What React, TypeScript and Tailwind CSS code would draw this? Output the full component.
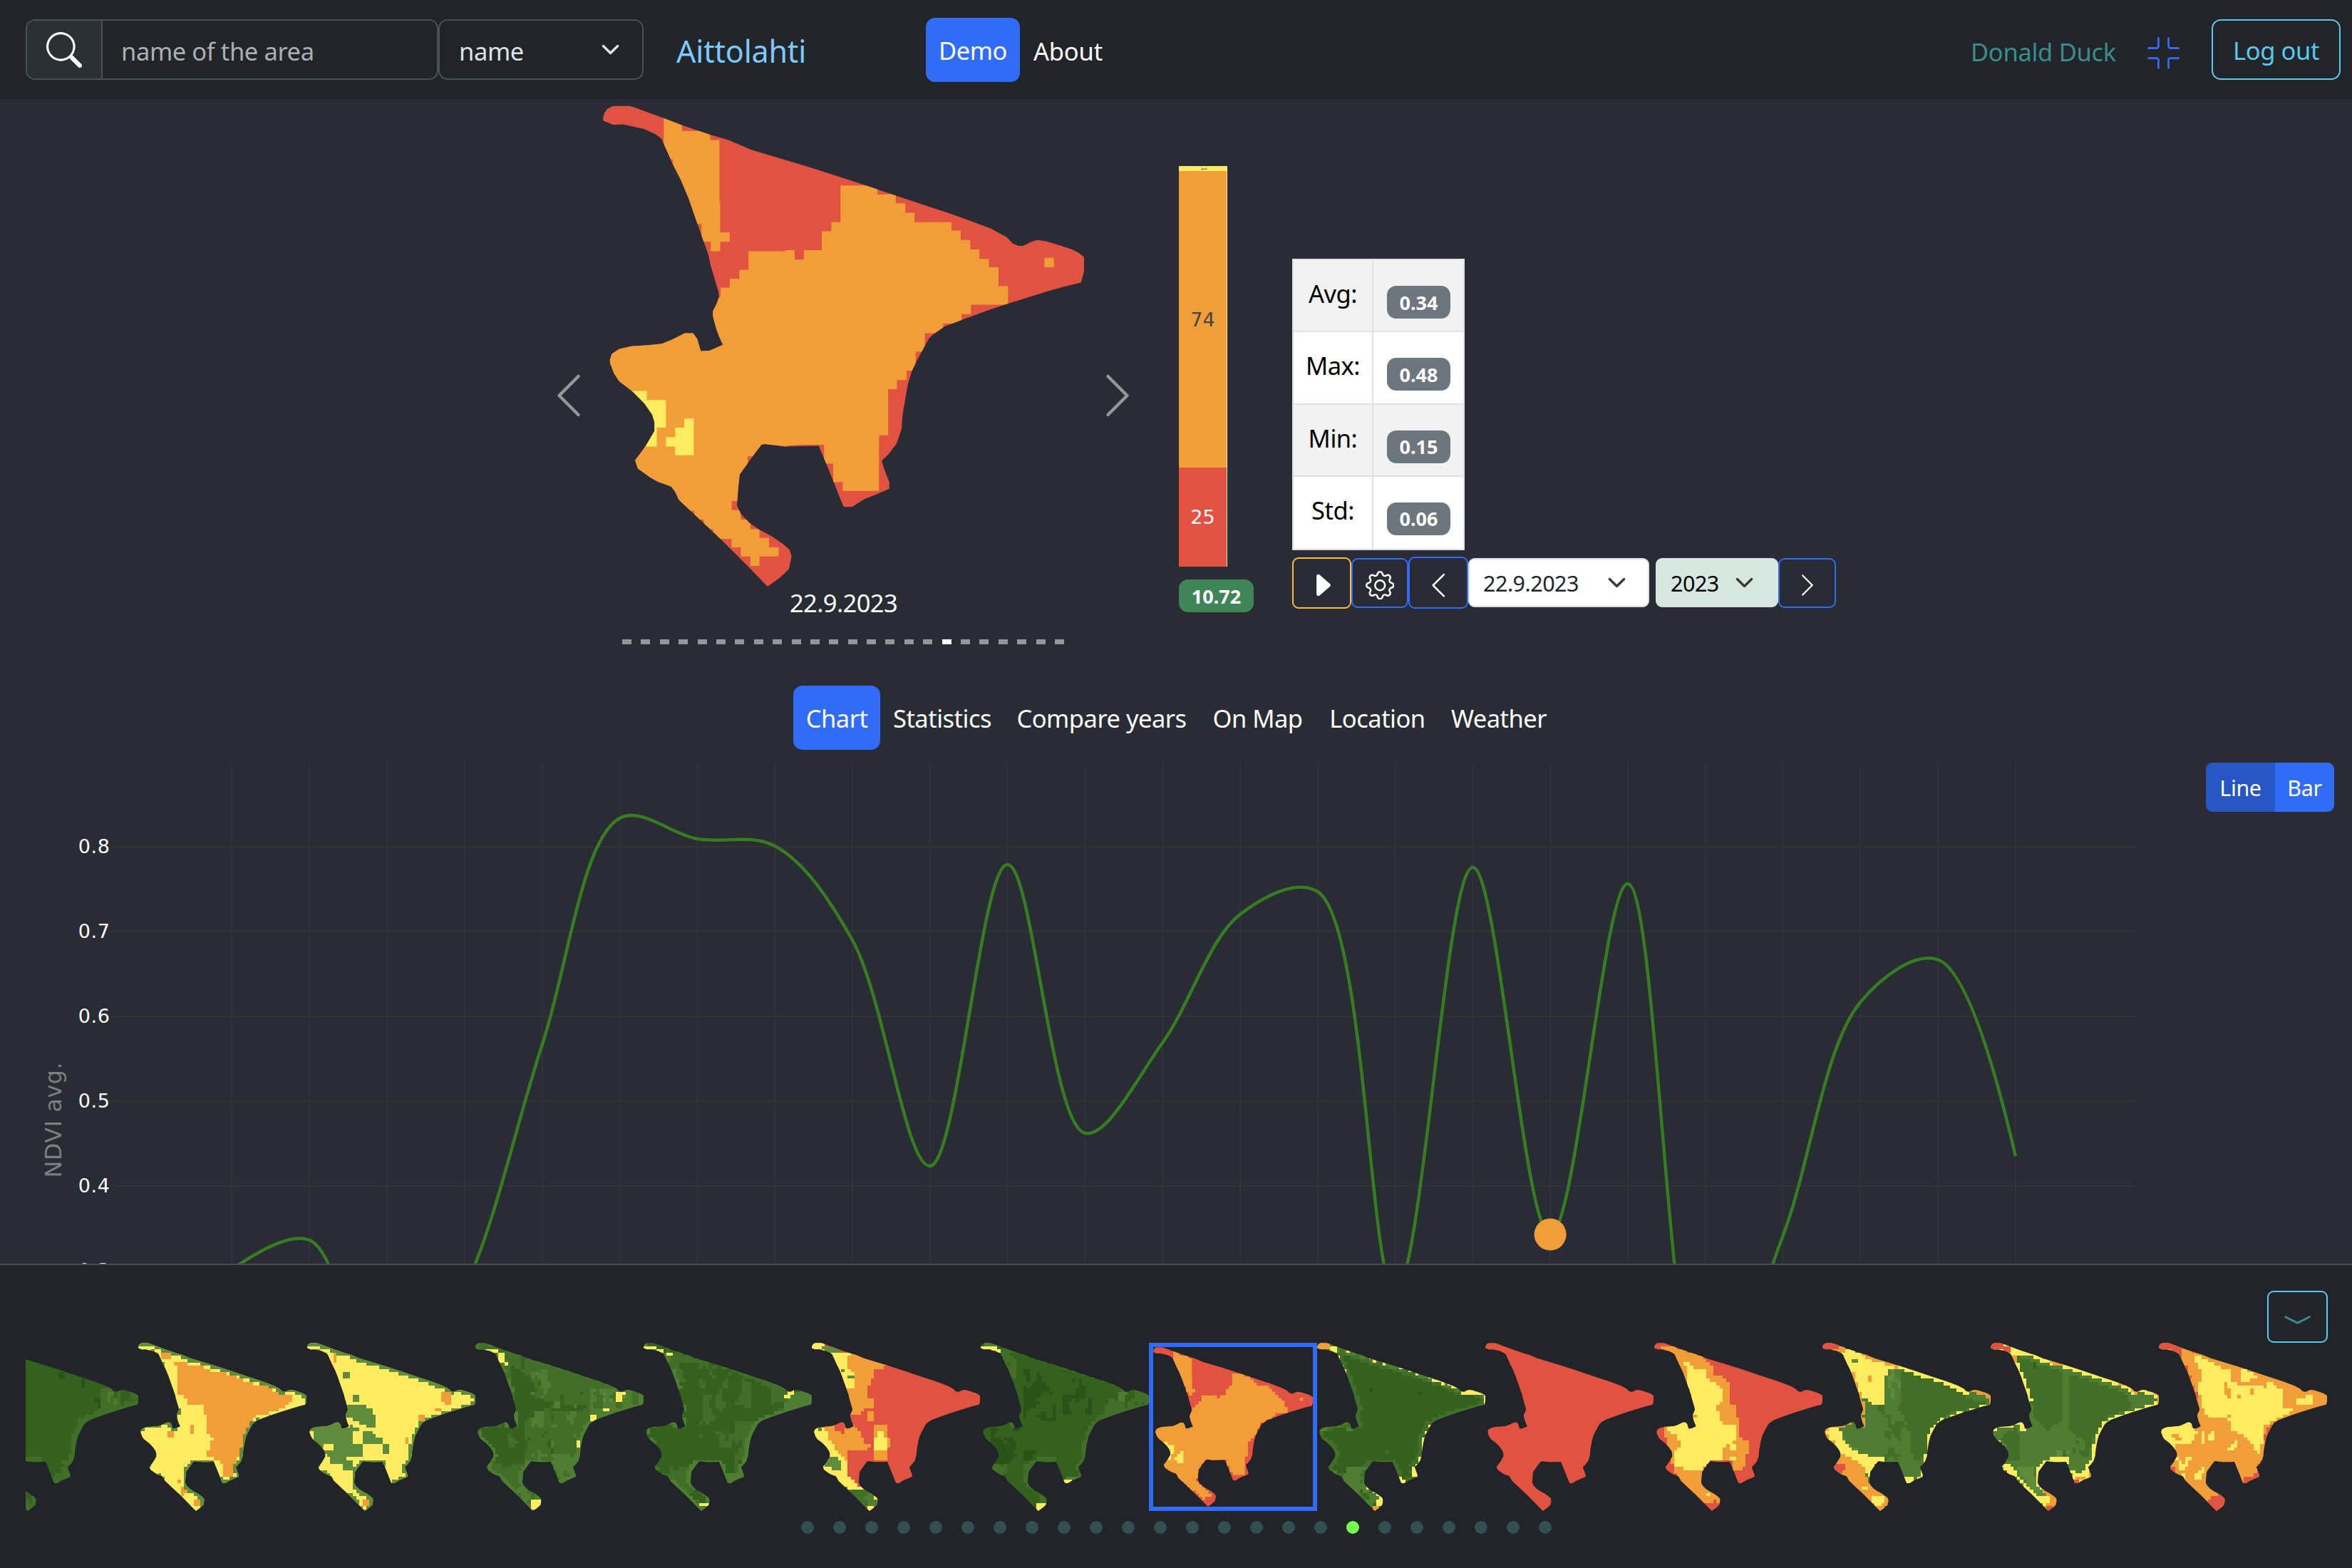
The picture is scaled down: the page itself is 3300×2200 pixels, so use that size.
import React from 'react';
import {
  BsCaretRightFill,
  BsChevronCompactDown,
  BsChevronLeft,
  BsChevronRight,
  BsFullscreenExit,
  BsGear,
  BsSearch,
} from 'react-icons/bs';

type Pt = [number, number];

/* NDVI palette */
const R = '#e15241';
const O = '#f19e38';
const Y = '#fdec5f';
const G = '#5e8b3c';
const L = '#4f7d31';
const M = '#416f28';
const D = '#35611f';
const X = '#2a5417';

/* ---------- field geometry ---------- */

const OUTLINE =
  '161,70 165,55 173,44 188,36 230,36 245,41 320,70 370,90 440,115 490,130 550,157 620,179 700,204 780,231 850,255 928,283 1000,308 1075,334 1130,355 1178,374 1218,397 1235,415 1250,421 1262,421 1280,411 1298,405 1320,408 1350,417 1390,431 1408,441 1421,452 1421,490 1413,522 1370,533 1325,546 1222,580 1170,598 1100,625 1055,643 1025,665 1014,677 1003,698 985,733 970,765 960,800 953,840 946,885 943,925 930,965 908,995 891,1012 897,1033 906,1058 911,1070 911,1089 880,1103 845,1118 813,1139 792,1139 785,1124 765,1070 745,1018 726,971 675,972 640,973 625,971 600,968 585,966 576,968 560,990 519,1050 515,1090 512,1135 522,1158 545,1183 570,1201 605,1221 635,1243 650,1257 655,1275 648,1310 625,1333 592,1358 545,1307 470,1228 415,1174 360,1120 350,1098 340,1083 305,1070 285,1058 252,1033 245,1010 258,993 275,968 296,930 296,905 290,885 270,855 240,823 203,793 190,772 180,745 179,735 184,718 203,705 235,697 280,694 315,690 340,680 375,661 397,661 408,677 417,710 440,709 475,693 465,670 458,650 449,615 449,600 458,582 465,562 463,545 443,475 437,445 420,395 405,350 385,290 365,240 347,203 335,175 314,126 300,115 270,100 215,87 188,88 162,77';

const parse = (s: string): Pt[] => s.split(' ').map((p) => p.split(',').map(Number) as Pt);

const TW = 336;
const TH = 708;
const outlineSmall: Pt[] = parse(OUTLINE).map(([x, y]) => [((x - 161) / 1260) * TW, ((y - 35) / 1323) * TH]);
const outlineSmallStr = outlineSmall.map((p) => p.map((v) => v.toFixed(1)).join(',')).join(' ');

const STRIP =
  '320,60 368,60 368,105 442,105 442,130 466,130 466,300 468,300 468,384 493,384 493,410 468,410 468,436 443,436 443,410 419,410 419,361 320,361';
const BODY =
  '783,255 852,255 880,264 880,280 928,278 928,304 953,304 953,330 977,330 977,356 1074,356 1074,379 1098,379 1098,405 1123,405 1123,431 1147,431 1147,457 1172,457 1172,480 1197,480 1197,532 1222,532 1222,583 1125,583 1125,609 1100,609 1100,635 1052,635 1052,661 1004,661 1004,712 980,712 980,764 956,764 956,790 931,790 931,815 908,815 908,942 884,942 884,1095 789,1095 789,1071 764,1071 764,1020 740,1020 740,968 675,968 642,971 642,1000 540,1000 540,1123 498,1123 498,1148 522,1148 522,1174 547,1174 547,1200 571,1200 571,1224 596,1224 596,1250 621,1250 621,1275 571,1275 571,1301 547,1301 547,1275 522,1275 522,1250 498,1250 498,1227 449,1227 449,1200 425,1200 425,1174 400,1174 400,1150 160,1150 160,640 430,640 430,562 469,562 469,536 493,536 493,512 518,512 518,487 542,487 542,436 638,436 638,433 663,433 663,459 687,459 687,433 734,433 734,381 759,381 759,356 783,356';

function FieldMap({ id, className }: { id: string; className: string }) {
  return (
    <svg className={className} viewBox="161 35 1260 1323" preserveAspectRatio="none">
      <clipPath id={id}>
        <polygon points={OUTLINE} />
      </clipPath>
      <g clipPath={`url(#${id})`}>
        <rect x="161" y="35" width="1260" height="1323" fill={R} />
        <polygon points={STRIP} fill={O} />
        <rect x="320" y="183" width="24" height="24" fill={R} />
        <polygon points={BODY} fill={O} />
        <rect x="1317" y="454" width="25" height="26" fill={O} />
        <polygon points="200,820 276,820 276,845 326,845 326,921 302,921 302,973 200,973" fill={Y} />
        <polygon points="374,896 399,896 399,997 350,997 350,973 326,973 326,947 350,947 350,921 374,921" fill={Y} />
      </g>
    </svg>
  );
}

/* ---------- rasterised thumbnails ---------- */

interface Layer {
  c: string;
  /** polygon the layer is limited to */
  p?: string;
  /** rectangle x1,y1,x2,y2 the layer is limited to */
  r?: [number, number, number, number];
  /** share of the cells that are painted */
  d?: number;
  /** only cells whose neighbour at this offset lies outside the field */
  e?: Pt;
}
interface Thumb {
  x0: number;
  base: string;
  layers: Layer[];
}

const Y0 = 372;
const N = 51.5;
const CW = TW / N;
const CH = TH / N;

function inside(x: number, y: number, poly: Pt[]) {
  let hit = false;
  for (let i = 0, j = poly.length - 1; i < poly.length; j = i++) {
    const [xi, yi] = poly[i];
    const [xj, yj] = poly[j];
    if (yi > y !== yj > y && x < ((xj - xi) * (y - yi)) / (yj - yi) + xi) hit = !hit;
  }
  return hit;
}

function hash(a: number, b: number, c: number) {
  const s = Math.sin(a * 127.1 + b * 311.7 + c * 74.7) * 43758.5453;
  return s - Math.floor(s);
}

/** Clumpy noise in 0..1: smooth patches with a little grain on top. */
function noise(i: number, j: number, seed: number) {
  const x = i / 2.3;
  const y = j / 3.1;
  const xi = Math.floor(x);
  const yi = Math.floor(y);
  const fx = x - xi;
  const fy = y - yi;
  const top = hash(xi, yi, seed) * (1 - fx) + hash(xi + 1, yi, seed) * fx;
  const bottom = hash(xi, yi + 1, seed) * (1 - fx) + hash(xi + 1, yi + 1, seed) * fx;
  return 0.78 * (top * (1 - fy) + bottom * fy) + 0.22 * hash(i, Math.floor(j / 2), seed + 9);
}

function raster(t: Thumb): Record<string, string> {
  const polys = t.layers.map((l) => (l.p ? parse(l.p) : null));
  const out: Record<string, string> = {};
  for (let j = 0; j < 52; j++) {
    let start = 0;
    let cur = '';
    for (let i = 0; i <= 52; i++) {
      let c = '';
      if (i < 52) {
        c = t.base;
        const cx = (i + 0.5) * CW;
        const cy = (j + 0.5) * CH;
        t.layers.forEach((l, k) => {
          const ax = cx + t.x0;
          const ay = cy + Y0;
          if (l.r && !(ax >= l.r[0] && ax <= l.r[2] && ay >= l.r[1] && ay <= l.r[3])) return;
          const poly = polys[k];
          if (poly && !inside(ax, ay, poly)) return;
          if (l.e && inside(cx + l.e[0] * CW, cy + l.e[1] * CH, outlineSmall)) return;
          if (l.d !== undefined && noise(i, j, k + t.x0) > 0.5 + (l.d - 0.5) * 0.72) return;
          c = l.c;
        });
      }
      if (c !== cur) {
        if (cur) {
          const x1 = start * CW;
          const x2 = i * CW;
          out[cur] = `${out[cur] ?? ''}M${x1.toFixed(2)} ${(j * CH).toFixed(2)}H${x2.toFixed(2)}v${(CH + 0.05).toFixed(2)}H${x1.toFixed(2)}z`;
        }
        start = i;
        cur = c;
      }
    }
  }
  return out;
}

const THUMBS: (Thumb | null)[] = [
  {
    x0: -59,
    base: D,
    layers: [
      { c: X, r: [118, 500, 132, 530], d: 0.6 },
      { c: X, r: [163, 530, 170, 570] },
      { c: X, r: [170, 612, 200, 650], d: 0.55 },
      { c: M, e: [1.2, 1.2] },
      { c: M, e: [2.2, 1.5], d: 0.5 },
      { c: M, r: [205, 560, 240, 680], d: 0.6 },
      { c: L, r: [215, 575, 235, 640], d: 0.5 },
    ],
  },
  {
    x0: 277,
    base: Y,
    layers: [
      {
        c: O,
        p: '345,450 378,450 378,463 410,463 410,477 425,490 456,503 475,520 505,545 540,557 560,595 592,600 575,635 545,665 510,680 497,735 484,780 482,825 475,850 463,937 443,937 446,880 430,860 412,855 425,770 412,740 410,630 372,635 372,600 352,595 358,490',
      },
      { c: Y, r: [440, 880, 452, 925], d: 0.5 },
      { c: O, r: [325, 410, 345, 435] },
      { c: O, r: [333, 750, 346, 775] },
      { c: O, r: [307, 778, 327, 791] },
      { c: O, r: [379, 722, 391, 762] },
      { c: O, r: [386, 1035, 399, 1062] },
      { c: O, r: [353, 955, 361, 967] },
      { c: O, r: [364, 980, 380, 1020], d: 0.6 },
      { c: G, e: [0.7, -0.7] },
      { c: G, e: [0.7, 0.3], r: [370, 680, 520, 1060] },
      { c: G, e: [-0.7, 0], d: 0.35 },
      { c: Y, r: [286, 384, 312, 399] },
    ],
  },
  {
    x0: 613,
    base: Y,
    layers: [
      {
        c: G,
        p: '630,735 655,720 675,707 682,735 705,720 720,740 745,750 750,775 765,775 765,800 725,800 722,850 700,860 690,860 683,885 657,885 655,850 640,810 628,775',
      },
      { c: Y, r: [645, 804, 665, 830] },
      { c: Y, r: [707, 740, 765, 800], d: 0.3 },
      { c: G, p: '700,640 730,640 745,660 752,730 730,725 712,700 690,690' },
      { c: G, r: [688, 490, 700, 518] },
      { c: G, r: [707, 587, 720, 613] },
      { c: G, r: [762, 804, 779, 843] },
      { c: G, r: [683, 870, 702, 912] },
      { c: G, e: [0.8, -0.8] },
      { c: G, e: [0.8, 0.3] },
      { c: G, e: [-0.8, 0.3], d: 0.4 },
      { c: Y, r: [622, 384, 636, 396] },
      { c: Y, r: [900, 598, 941, 634] },
      { c: O, r: [662, 410, 670, 450] },
      { c: O, r: [882, 585, 902, 625] },
      { c: O, r: [888, 625, 898, 640] },
      { c: O, r: [869, 652, 878, 665] },
      { c: O, r: [832, 680, 845, 707] },
      { c: O, r: [810, 777, 818, 800] },
      { c: O, r: [723, 1035, 736, 1062] },
    ],
  },
  {
    x0: 949,
    base: M,
    layers: [
      { c: D, p: '1020,460 1060,520 1060,600 1120,630 1180,630 1150,670 1090,650 1050,700 1050,870 1000,900 985,870 965,780 960,720 1030,700', d: 0.95 },
      { c: D, r: [1040, 430, 1200, 860], d: 0.2 },
      { c: L, r: [1060, 480, 1200, 880], d: 0.25 },
      { c: L, r: [1180, 560, 1260, 680], d: 0.6 },
      { c: G, r: [1190, 575, 1250, 625], d: 0.3 },
      { c: L, r: [1100, 840, 1160, 970], d: 0.6 },
      { c: L, r: [1000, 920, 1090, 1080], d: 0.5 },
      { c: L, e: [1.2, 0.5] },
      { c: L, e: [-1, 0.3], d: 0.6 },
      { c: Y, r: [968, 397, 995, 410] },
      { c: Y, r: [997, 410, 1010, 450] },
      { c: Y, r: [1005, 450, 1013, 465] },
      { c: Y, p: '1227,585 1247,578 1240,622 1230,622' },
      { c: Y, r: [1206, 652, 1214, 665] },
      { c: Y, r: [1176, 680, 1188, 707] },
      { c: Y, r: [1149, 790, 1157, 815] },
      { c: Y, r: [1060, 1035, 1079, 1068] },
    ],
  },
  {
    x0: 1287,
    base: D,
    layers: [
      { c: M, p: '1330,400 1560,540 1570,600 1540,560 1430,460 1360,460 1370,540 1350,540' },
      { c: M, r: [1400, 440, 1500, 860], d: 0.26 },
      { c: M, r: [1470, 700, 1520, 960], d: 0.7 },
      { c: M, r: [1540, 560, 1630, 700], d: 0.7 },
      { c: L, r: [1560, 575, 1630, 660], d: 0.5 },
      { c: M, r: [1310, 900, 1425, 1080], d: 0.7 },
      { c: L, e: [1.2, 0.6] },
      { c: L, e: [-1, 0.3], d: 0.5 },
      { c: L, r: [1450, 920, 1490, 970] },
      { c: Y, r: [1287, 380, 1310, 400] },
      { c: Y, r: [1310, 397, 1324, 410] },
      { c: Y, r: [1330, 409, 1343, 424] },
      { c: Y, r: [1397, 1040, 1415, 1066] },
      { c: Y, r: [1568, 595, 1578, 612] },
      { c: Y, r: [1572, 565, 1584, 590], d: 0.7 },
    ],
  },
  {
    x0: 56,
    base: R,
    layers: [
      { c: O, p: '130,410 203,460 203,475 183,480 183,510 165,560 165,600 177,610 177,640 158,650 155,668 125,670 110,500 110,420' },
      { c: O, p: '80,715 103,715 103,740 120,760 125,720 140,715 150,735 160,790 172,800 170,820 125,820 128,930 150,985 110,960 80,860 75,790' },
      { c: R, p: '125,820 170,820 180,870 160,890 150,920 150,980 128,950' },
      { c: O, r: [170, 655, 183, 707] },
      { c: O, r: [177, 722, 203, 870] },
      { c: O, r: [196, 765, 210, 817] },
      { c: Y, r: [183, 765, 203, 830] },
      { c: Y, r: [188, 750, 197, 765] },
      { c: Y, p: '56,372 85,372 80,395 105,410 137,422 125,440 130,475 143,500 143,570 120,570 95,425 75,405 56,405' },
      { c: Y, p: '50,735 85,735 90,780 105,820 118,860 130,880 130,930 150,970 165,995 140,1000 105,960 75,900 85,850 70,800 55,760' },
      { c: G, p: '78,380 112,400 112,420 90,415 78,400' },
      { c: G, p: '88,850 105,850 118,895 100,915 83,885' },
      { c: M, r: [92, 860, 108, 890], d: 0.5 },
      { c: G, r: [112, 477, 123, 500] },
      { c: G, r: [125, 503, 138, 518] },
      { c: G, r: [66, 730, 74, 750] },
      { c: M, p: '108,965 130,985 160,995 165,985 195,1030 185,1065 165,1085' },
      { c: L, p: '108,965 130,985 160,995 165,985 195,1030 185,1065 165,1085', d: 0.35 },
      { c: Y, r: [180, 1015, 190, 1035] },
      { c: Y, r: [168, 1062, 182, 1080] },
    ],
  },
  {
    x0: 392,
    base: D,
    layers: [
      { c: X, p: '470,480 500,480 530,560 540,640 540,700 480,690 475,560', d: 0.65 },
      { c: X, r: [555, 530, 612, 680], d: 0.5 },
      { c: X, r: [410, 735, 480, 885], d: 0.5 },
      { c: X, r: [480, 820, 505, 870], d: 0.7 },
      { c: M, r: [430, 400, 465, 520], d: 0.8 },
      { c: M, r: [610, 560, 730, 700], d: 0.35 },
      { c: L, r: [665, 580, 690, 625], d: 0.6 },
      { c: M, r: [500, 855, 545, 875] },
      { c: M, r: [410, 880, 520, 1080], d: 0.3 },
      { c: M, e: [1, 0.5] },
      { c: L, r: [560, 930, 595, 950], d: 0.8 },
      { c: L, r: [400, 372, 425, 385] },
      { c: Y, p: '388,385 415,383 425,395 432,415 410,405 388,402' },
      { c: Y, r: [680, 574, 688, 585] },
      { c: Y, r: [558, 950, 572, 965] },
      { c: Y, r: [500, 1050, 524, 1080] },
    ],
  },
  null,
  {
    x0: 1067,
    base: D,
    layers: [
      { c: X, r: [1150, 570, 1180, 625], d: 0.35 },
      { c: X, r: [1270, 582, 1277, 598] },
      { c: M, r: [1190, 820, 1220, 870], d: 0.5 },
      { c: M, e: [1.6, -1.2] },
      { c: M, e: [1.4, 0.6] },
      { c: M, e: [-1.2, 0.3] },
      { c: L, e: [0.9, -0.8], d: 0.6 },
      { c: L, r: [1100, 900, 1200, 1060], d: 0.4 },
      { c: Y, e: [0.5, -0.5], r: [1095, 400, 1403, 600], d: 0.55 },
      { c: Y, r: [1355, 570, 1385, 592] },
      { c: Y, e: [0.6, 0], r: [1370, 570, 1403, 640] },
      { c: Y, e: [0.5, 0], r: [1260, 720, 1300, 940], d: 0.6 },
      { c: Y, e: [-0.5, 0], r: [1100, 430, 1140, 560], d: 0.6 },
      { c: Y, r: [1228, 930, 1238, 965] },
      { c: Y, r: [1228, 950, 1245, 965] },
      { c: Y, r: [1258, 900, 1268, 940] },
      { c: Y, p: '1165,980 1200,1010 1200,1050 1185,1070 1188,1020' },
      { c: Y, r: [1092, 385, 1106, 412] },
      { c: O, r: [1067, 372, 1094, 402] },
      { c: O, r: [1176, 1065, 1190, 1080] },
    ],
  },
  { x0: 1403, base: R, layers: [] },
  {
    x0: 172,
    base: R,
    layers: [
      {
        c: O,
        p: '183,385 205,380 230,400 275,437 288,470 288,505 313,517 325,550 325,630 333,640 340,700 345,775 358,790 358,835 355,880 348,910 333,912 325,870 285,870 268,900 268,965 310,1020 300,1045 285,1050 265,1050 222,950 210,910 205,850 195,780 190,700 240,700 230,500 200,420',
      },
      {
        c: Y,
        p: '233,450 247,450 247,475 273,477 275,515 290,540 312,570 312,600 300,630 300,680 313,720 333,720 333,790 320,800 307,820 307,865 285,870 265,910 245,912 210,885 210,830 228,800 215,760 195,740 205,700 255,690 250,650 240,560',
      },
      { c: O, r: [293, 630, 300, 655] },
      { c: Y, r: [325, 800, 333, 820] },
      { c: Y, r: [325, 855, 333, 870] },
      { c: Y, r: [275, 1005, 283, 1020] },
      { c: R, r: [172, 765, 200, 790], d: 0.6 },
      { c: R, r: [290, 1035, 305, 1060], d: 0.6 },
    ],
  },
  {
    x0: 509,
    base: L,
    layers: [
      { c: M, p: '665,490 700,500 780,560 800,610 840,620 830,640 760,670 735,720 715,850 690,870 680,720 665,660' },
      { c: M, r: [620, 640, 720, 870], d: 0.25 },
      { c: G, p: '540,740 560,800 620,860 600,880 560,850 530,760', d: 0.7 },
      { c: G, r: [640, 480, 665, 600], d: 0.25 },
      { c: Y, p: '535,385 600,420 665,470 640,490 635,510 635,600 628,640 605,625 595,600 575,600' },
      { c: G, r: [570, 435, 583, 450] },
      { c: O, r: [598, 505, 609, 543] },
      { c: Y, e: [1.0, -0.8], r: [650, 460, 847, 640] },
      { c: O, e: [0.7, -0.7], r: [590, 420, 660, 480] },
      { c: O, e: [0.6, -0.9], r: [805, 570, 847, 600] },
      { c: O, e: [0.5, 0], r: [835, 590, 847, 640], d: 0.6 },
      { c: Y, e: [0.5, 0.2], r: [700, 640, 847, 960], d: 0.75 },
      { c: Y, p: '505,725 540,725 555,800 580,830 620,860 618,880 603,940 590,900 550,840 515,790' },
      { c: Y, r: [615, 858, 632, 874] },
      { c: O, p: '535,830 560,850 590,890 597,935 605,975 650,1030 625,1085 555,950 525,900' },
      { c: O, e: [-0.6, 0], r: [509, 500, 600, 800], d: 0.8 },
      { c: R, p: '530,885 553,885 550,930 530,920' },
      { c: Y, r: [586, 980, 600, 995] },
      { c: Y, p: '605,1020 630,1020 632,1045 622,1062 605,1045' },
      { c: Y, r: [675, 940, 690, 965] },
      { c: O, r: [530, 385, 552, 412] },
      { c: R, r: [509, 372, 540, 400], d: 0.85 },
    ],
  },
  {
    x0: 847,
    base: L,
    layers: [
      { c: M, p: '895,430 940,435 990,470 990,700 960,740 935,690 925,600 905,480' },
      { c: M, p: '1002,480 1060,520 1120,590 1130,650 1080,680 1055,760 1030,780 1005,740' },
      { c: D, r: [900, 430, 960, 480], d: 0.3 },
      { c: M, r: [850, 710, 910, 870], d: 0.45 },
      { c: M, r: [990, 760, 1060, 860], d: 0.4 },
      { c: G, r: [970, 820, 1005, 870], d: 0.7 },
      { c: L, e: [2, -1.6] },
      { c: Y, e: [1.0, -0.7] },
      { c: Y, e: [0.7, 0.3] },
      { c: Y, e: [-0.8, 0.3], r: [880, 420, 940, 620] },
      { c: Y, r: [962, 858, 1003, 875] },
      { c: O, e: [0.6, -0.6], r: [930, 430, 1183, 600], d: 0.3 },
      { c: O, e: [0.4, 0], r: [1160, 570, 1183, 640] },
      { c: Y, p: '868,885 885,880 905,940 950,1010 965,1020 965,1060 945,1050 900,950' },
      { c: G, p: '900,900 930,890 938,970 958,1010 950,1025 925,985' },
      { c: O, p: '955,985 985,1020 975,1085 950,1065 965,1030 945,985' },
      { c: Y, p: '1005,905 1025,920 1040,905 1050,940 1020,965 1008,940' },
      { c: O, r: [1015, 935, 1055, 955], d: 0.7 },
      { c: O, r: [1040, 900, 1050, 940] },
      { c: R, r: [1010, 950, 1025, 965] },
      { c: R, r: [955, 1062, 970, 1080] },
      { c: Y, p: '880,385 930,425 900,425 898,440 885,430' },
      { c: O, r: [885, 425, 897, 450] },
      { c: R, p: '840,372 865,372 884,388 884,410 865,405 840,405' },
    ],
  },
  {
    x0: 1183,
    base: O,
    layers: [
      {
        c: Y,
        p: '1250,422 1275,440 1300,465 1325,490 1345,475 1400,530 1430,570 1428,640 1452,655 1425,690 1395,720 1390,790 1382,840 1360,770 1330,740 1320,690 1280,690 1270,640 1262,560 1270,500',
      },
      { c: O, r: [1325, 460, 1343, 610], d: 0.65 },
      { c: O, r: [1343, 475, 1400, 545], d: 0.4 },
      { c: O, r: [1280, 480, 1425, 700], d: 0.06 },
      { c: Y, r: [1280, 680, 1360, 820], d: 0.25 },
      { c: Y, p: '1180,735 1190,715 1245,700 1255,740 1245,780 1225,800 1225,870 1210,860 1195,790' },
      { c: O, r: [1210, 750, 1250, 850], d: 0.3 },
      { c: Y, r: [1225, 740, 1275, 800], d: 0.4 },
      { c: Y, r: [1215, 860, 1275, 950], d: 0.45 },
      { c: Y, r: [1458, 605, 1490, 640], d: 0.85 },
      { c: Y, r: [1478, 595, 1492, 640] },
      { c: R, e: [-0.5, 0], r: [1225, 400, 1262, 600], d: 0.7 },
      { c: R, e: [0.5, 0.2], r: [1375, 700, 1430, 880], d: 0.6 },
      { c: R, r: [1203, 890, 1215, 925], d: 0.7 },
      { c: R, p: '1350,935 1375,935 1378,880 1390,900 1390,950 1350,970' },
      { c: R, p: '1280,1035 1308,1005 1320,1030 1310,1060 1298,1085 1285,1060' },
      { c: R, p: '1175,372 1205,372 1226,388 1226,425 1205,405 1175,402' },
    ],
  },
];

function Thumbnail({ t, id }: { t: Thumb; id: string }) {
  return (
    <svg className="h-[236px] w-[236.25px] shrink-0" viewBox={`0 0 ${TW} ${TH}`} preserveAspectRatio="none">
      <clipPath id={id}>
        <polygon points={outlineSmallStr} />
      </clipPath>
      <g clipPath={`url(#${id})`}>
        <rect width={TW} height={TH} fill={t.base} />
        {Object.entries(raster(t))
          .filter(([c]) => c !== t.base)
          .map(([c, d]) => (
            <path key={c} d={d} fill={c} shapeRendering="crispEdges" />
          ))}
      </g>
    </svg>
  );
}

/* ---------- chart ---------- */

const NDVI_Y = [
  1781, 1740, 1975, 1808, 1466, 1148, 1177, 1187, 1319, 1636, 1213, 1590, 1463, 1283, 1251, 1812, 1217, 1732, 1240,
  1985, 1734, 1406, 1346.5, 1622,
];
const gx = (i: number) => 325.5 + i * 108.8;
const PTS: Pt[] = NDVI_Y.map((y, i) => [gx(i), y]);

function tangents(a: Pt, b: Pt, c: Pt): [Pt, Pt] {
  const d1x = a[0] - b[0];
  const d1y = a[1] - b[1];
  const d2x = c[0] - b[0];
  const d2y = c[1] - b[1];
  const d1a = Math.pow(d1x * d1x + d1y * d1y, 0.25);
  const d2a = Math.pow(d2x * d2x + d2y * d2y, 0.25);
  const nx = d2a * d2a * d1x - d1a * d1a * d2x;
  const ny = d2a * d2a * d1y - d1a * d1a * d2y;
  const q1 = 3 * d2a * (d1a + d2a);
  const q2 = 3 * d1a * (d1a + d2a);
  return [
    [b[0] + nx / q1, b[1] + ny / q1],
    [b[0] - nx / q2, b[1] - ny / q2],
  ];
}

function spline(p: Pt[]) {
  const t = p.slice(1, -1).map((b, i) => tangents(p[i], b, p[i + 2]));
  let s = `M${p[0]}Q${t[0][0]} ${p[1]}`;
  for (let i = 1; i < t.length; i++) s += `C${t[i - 1][1]} ${t[i][0]} ${p[i + 1]}`;
  return s + `Q${t[t.length - 1][1]} ${p[p.length - 1]}`;
}

function Chart() {
  return (
    <svg className="block h-[704px] w-[3300px]" viewBox="0 1070 3300 704">
      {PTS.map((p, i) => (
        <rect key={i} x={p[0] - 1} y="1070" width="2" height="704" fill="#323434" />
      ))}
      {[1188, 1307, 1426, 1545, 1664].map((y) => (
        <rect key={y} x="155" y={y - 1} width="2843" height="2" fill="#323434" />
      ))}
      <path d={spline(PTS)} fill="none" stroke="#367d22" strokeWidth="4.5" />
      <circle cx={gx(17)} cy="1732" r="22.5" fill={O} />
      <g fill="#fff" fontSize="27" fontFamily="'DejaVu Sans', sans-serif" letterSpacing="0.6" textAnchor="end">
        {['0.8', '0.7', '0.6', '0.5', '0.4', '0.3'].map((v, i) => (
          <text key={v} x="154.5" y={1196.5 + i * 119.1}>
            {v}
          </text>
        ))}
      </g>
      <text
        transform="translate(86 1571) rotate(-90)"
        textAnchor="middle"
        fontSize="31.5"
        letterSpacing="0.7"
        fontFamily="'DejaVu Sans', sans-serif"
        fill="#7d7e80"
      >
        NDVI avg.
      </text>
    </svg>
  );
}

/* ---------- small parts ---------- */

function Caret({ className }: { className: string }) {
  return (
    <svg className={`size-[27px] ${className}`} viewBox="0 0 16 16" fill="none">
      <path d="m2 5 6 6 6-6" stroke="currentColor" strokeWidth="2" strokeLinecap="round" strokeLinejoin="round" />
    </svg>
  );
}

function Header() {
  return (
    <header className="flex h-[139px] items-center bg-[#212529] pl-[36px] text-[34.5px] leading-none tracking-[-0.4px]">
      <div className="flex h-[85px] w-[579px] overflow-hidden rounded-[13px] border-2 border-[#495057]">
        <div className="flex w-[106px] items-center justify-center border-r-2 border-[#495057] bg-[#2b3035]">
          <BsSearch className="size-[50px] text-white" />
        </div>
        <div className="flex items-center pt-[5px] pl-[26px] text-[#adb0b3]">name of the area</div>
      </div>
      <div className="flex h-[85px] w-[288px] items-center justify-between rounded-[13px] border-2 border-[#495057] pr-[31px] pl-[27px] text-[#dee2e6]">
        <span className="pt-[5px]">name</span>
        <Caret className="text-[#dee2e6]" />
      </div>
      <div className="ml-[46px] w-[350px] pt-[4px] text-[43px] tracking-[-0.2px] text-[#7dc9fa]">Aittolahti</div>
      <div className="flex h-[90px] w-[132px] items-center justify-center rounded-[13px] bg-[#306cf6] pt-[4px] text-white">
        Demo
      </div>
      <div className="ml-[19px] pt-[5px] tracking-[-0.2px] text-white">About</div>
      <div className="mr-[16px] ml-auto flex items-center">
        <span className="pt-[8px] tracking-[-0.3px] text-[#3b8c8c]">Donald Duck</span>
        <BsFullscreenExit className="mt-[10px] ml-[44px] size-[45px] text-[#306cf6]" />
        <div className="ml-[45px] flex h-[85px] w-[181px] items-center justify-center rounded-[13px] border-2 border-[#5bc8ef] pt-[4px] text-[#5bc8ef]">
          Log out
        </div>
      </div>
    </header>
  );
}

function Carousel() {
  return (
    <div className="ml-[762px] flex w-[842px] pt-[9px]">
      <BsChevronLeft className="mt-[371px] size-[72px] shrink-0 text-[#949699]" />
      <div className="ml-[12px] w-[675px]">
        <FieldMap id="main-field" className="block size-[675px]" />
        <div className="mt-[-1px] text-center text-[34.5px] leading-[48px] tracking-[-0.6px] text-white">22.9.2023</div>
        <div className="mt-[27px] ml-[27px] flex gap-[13.4px]">
          {Array.from({ length: 24 }, (_, i) => (
            <span key={i} className={`h-[7px] w-[13px] shrink-0 ${i === 17 ? 'bg-white' : 'bg-[#949699]'}`} />
          ))}
        </div>
      </div>
      <BsChevronRight className="mt-[371px] ml-[11px] size-[72px] shrink-0 text-[#949699]" />
    </div>
  );
}

function Distribution() {
  return (
    <div className="ml-[50px] w-[105px] pt-[94px]">
      <div className="flex h-[562px] w-[68px] flex-col border-r border-[#fbe3b0] font-[DejaVu_Sans] text-[27px] leading-none">
        <div className="flex h-[7px] items-center justify-center bg-[#fdec5f] text-[#444]">
          <span className="rotate-90 text-[8px] leading-none">1</span>
        </div>
        <div className="flex h-[416px] items-center justify-center bg-[#f19e38] text-[#444]">74</div>
        <div className="flex h-[139px] items-center justify-center bg-[#e15241] text-white">25</div>
      </div>
      <div className="mt-[18px] flex h-[46px] items-center justify-center rounded-[13px] bg-[#408558] pt-[1px] text-[27px] leading-none font-bold text-white">
        10.72
      </div>
    </div>
  );
}

const STATS = [
  ['Avg:', '0.34'],
  ['Max:', '0.48'],
  ['Min:', '0.15'],
  ['Std:', '0.06'],
];

function Stats() {
  return (
    <div className="ml-[54px] pt-[224px]">
      <div className="grid h-[409px] w-[242px] grid-rows-4 divide-y-2 divide-[#dee2e6] border-2 border-[#dee2e6]">
        {STATS.map(([label, value], i) => (
          <div key={label} className={`flex ${i % 2 ? 'bg-white' : 'bg-[#f2f2f2]'}`}>
            <div className="w-[112px] border-r-2 border-[#dee2e6] pt-[20px] text-center text-[34.5px] leading-[54px] tracking-[-0.5px] text-black">
              {label}
            </div>
            <div className="mt-[36px] ml-[19px] flex h-[46px] w-[89px] items-center justify-center rounded-[13px] bg-[#6d757d] text-[27px] leading-none font-bold text-white">
              {value}
            </div>
          </div>
        ))}
      </div>
      <div className="mt-[9px] flex h-[73px] items-center text-[30.5px] leading-none tracking-[-0.5px]">
        <div className="flex h-[72px] w-[83px] items-center justify-center rounded-[9px] border-2 border-[#f5bd3e] text-white">
          <BsCaretRightFill className="mt-[7px] size-[42px]" />
        </div>
        <div className="flex h-[70px] w-[80px] items-center justify-center rounded-[9px] border-2 border-[#306cf6] text-white">
          <BsGear className="mt-[7px] size-[40.5px]" />
        </div>
        <div className="flex h-[73px] w-[84px] items-center justify-center rounded-[9px] border-2 border-[#306cf6] text-white">
          <BsChevronLeft className="mt-[7px] size-[40.5px]" />
        </div>
        <div className="flex h-[69px] w-[254px] items-center justify-between rounded-[9px] border-2 border-[#dee2e6] bg-white pr-[30px] pl-[19px] text-[#212529]">
          <span className="pt-[2px]">22.9.2023</span>
          <Caret className="text-[#343a40]" />
        </div>
        <div className="ml-[9px] flex h-[69px] w-[172px] items-center justify-between rounded-[9px] border-2 border-[#dee2e6] bg-[#d6e7df] pr-[32px] pl-[19px] text-black">
          <span className="pt-[2px]">2023</span>
          <Caret className="text-[#343a40]" />
        </div>
        <div className="flex h-[70px] w-[81px] items-center justify-center rounded-[9px] border-2 border-[#306cf6] text-white">
          <BsChevronRight className="mt-[7px] size-[36px]" />
        </div>
      </div>
    </div>
  );
}

const TABS: [string, string][] = [
  ['Chart', 'w-[122px] rounded-[13px] bg-[#306cf6]'],
  ['Statistics', 'w-[174px]'],
  ['Compare years', 'w-[273px]'],
  ['On Map', 'w-[165px]'],
  ['Location', 'w-[171px]'],
  ['Weather', 'w-[170px]'],
];

export default function App() {
  return (
    <div className="flex h-[2200px] w-[3300px] flex-col overflow-hidden bg-[#292c34] font-['Noto_Sans',sans-serif]">
      <Header />
      <main className="h-[1634px] overflow-hidden">
        <section className="flex h-[823px] items-start">
          <Carousel />
          <Distribution />
          <Stats />
        </section>
        <nav className="ml-[1113px] flex h-[90px] text-[34.5px] leading-none tracking-[-0.5px] text-white">
          {TABS.map(([name, cls]) => (
            <div key={name} className={`flex items-center justify-center pt-[3px] whitespace-nowrap ${cls}`}>
              {name}
            </div>
          ))}
        </nav>
        <section className="relative mt-[18px]">
          <Chart />
          <div className="absolute top-0 right-[25px] flex h-[69px] overflow-hidden rounded-[9px] text-[30.5px] leading-none tracking-[-0.4px] text-white">
            <div className="flex w-[97px] items-center justify-center bg-[#2656c4] pt-[2px]">Line</div>
            <div className="flex w-[83px] items-center justify-center bg-[#306cf6] pt-[2px]">Bar</div>
          </div>
        </section>
      </main>
      <footer className="h-[427px] border-t-2 border-[#4a4c50] bg-[#212529] px-[36px] pt-[36px]">
        <div className="flex justify-end">
          <div className="mr-[-2px] flex h-[73px] w-[85px] items-center justify-center rounded-[9px] border-2 border-[#5bc8ef] text-[#3b8c8c]">
            <BsChevronCompactDown className="mt-[6px] size-[45px]" />
          </div>
        </div>
        <div className="mr-[-2px] overflow-hidden">
          <div className="ml-[-78px] flex h-[236px]">
            {THUMBS.map((t, i) =>
              t ? (
                <Thumbnail key={i} t={t} id={`field-${i}`} />
              ) : (
                <div key={i} className="h-[236px] w-[236.25px] shrink-0 border-6 border-[#306cf6]">
                  <FieldMap id={`field-${i}`} className="block h-full w-full" />
                </div>
              ),
            )}
          </div>
        </div>
        <div className="mt-[14px] flex justify-center gap-[27px]">
          {Array.from({ length: 24 }, (_, i) => (
            <span key={i} className={`size-[18px] rounded-full ${i === 17 ? 'bg-[#76fb4c]' : 'bg-[#325052]'}`} />
          ))}
        </div>
      </footer>
    </div>
  );
}
